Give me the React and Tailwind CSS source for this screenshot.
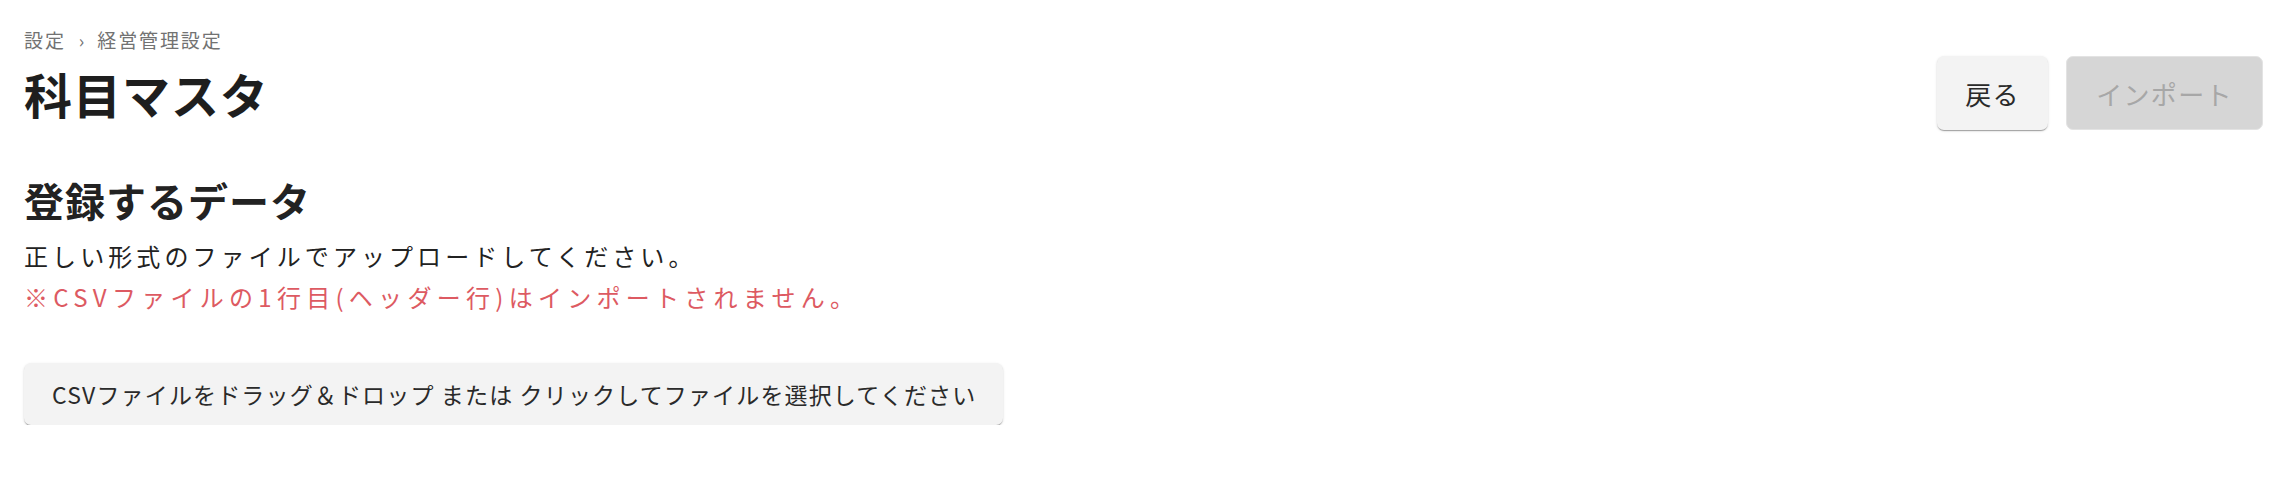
import React from "react";

const font = { fontFamily: '"Noto Sans CJK JP", "Noto Sans", sans-serif' };

export default function App() {
  return (
    <div className="w-full bg-white px-[24px] pt-[28px]" style={font}>
      <nav className="flex items-center gap-[13px] text-[19px] leading-[24px] tracking-[0.1em] text-[#727272]">
        <span>設定</span>
        <span className="text-[18px] tracking-normal">›</span>
        <span>経営管理設定</span>
      </nav>
      <div className="mt-[4px] flex items-center justify-between pr-[5px]">
        <h1 className="text-[48px] font-bold leading-[74px] tracking-[0.02em] text-[#1e1e1e]">科目マスタ</h1>
        <div className="flex items-center gap-[18px]">
          <button className="flex h-[74px] w-[111px] items-center justify-center rounded-[7px] bg-[#f3f3f3] text-[26px] tracking-[0.05em] text-[#2a2a2a] shadow-[0_2px_1px_-1px_rgba(0,0,0,0.2),0_1px_1px_0_rgba(0,0,0,0.14),0_1px_3px_0_rgba(0,0,0,0.12)]">
            戻る
          </button>
          <button
            disabled
            className="flex h-[74px] w-[197px] items-center justify-center rounded-[7px] border border-[#e3e3e3] bg-[#d6d6d6] text-[26px] tracking-[0.05em] text-[#a7a7a7]"
          >
            インポート
          </button>
        </div>
      </div>
      <h2 className="mt-[46px] text-[40px] font-bold leading-[48px] tracking-[0.025em] text-[#222222]">登録するデータ</h2>
      <p className="mt-[11px] text-[24px] leading-[41px] tracking-[0.17em] text-[#222222]">
        正しい形式のファイルでアップロードしてください。
      </p>
      <p className="text-[24px] leading-[41px] tracking-[0.22em] text-[#dd5a62]">
        ※CSVファイルの1行目(ヘッダー行)はインポートされません。
      </p>
      <button className="mt-[46px] flex h-[62px] w-[979px] items-center rounded-[7px] bg-[#f3f3f3] pl-[28px] text-[23px] tracking-[0.05em] text-[#2a2a2a] shadow-[0_2px_1px_-1px_rgba(0,0,0,0.2),0_1px_1px_0_rgba(0,0,0,0.14),0_1px_3px_0_rgba(0,0,0,0.12)]">
        CSVファイルをドラッグ＆ドロップ または クリックしてファイルを選択してください
      </button>
    </div>
  );
}
